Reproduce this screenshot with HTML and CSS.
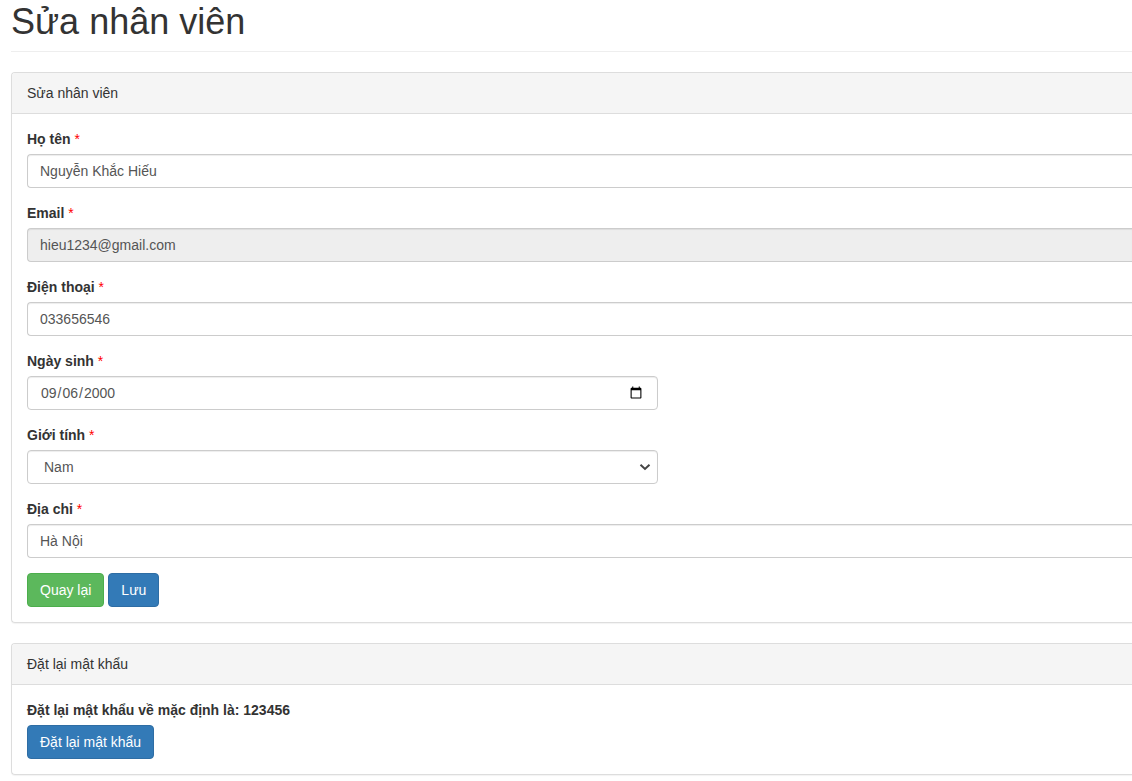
FILE: index.html
```html
<!DOCTYPE html>
<html lang="vi">
<head>
<meta charset="utf-8">
<meta name="viewport" content="width=device-width, initial-scale=1">
<title>Sửa nhân viên</title>
<link rel="stylesheet" href="styles.css">
</head>
<body>
<main class="page">
  <h1 class="page-header">Sửa nhân viên</h1>
  <section class="panel">
    <div class="panel-heading">Sửa nhân viên</div>
    <form class="panel-body">
      <div class="form-group">
        <label for="name">Họ tên <span class="required">*</span></label>
        <input class="form-control" id="name" type="text" value="Nguyễn Khắc Hiếu">
      </div>
      <div class="form-group">
        <label for="email">Email <span class="required">*</span></label>
        <input class="form-control" id="email" type="email" value="hieu1234@gmail.com" readonly>
      </div>
      <div class="form-group">
        <label for="phone">Điện thoại <span class="required">*</span></label>
        <input class="form-control" id="phone" type="text" value="033656546">
      </div>
      <div class="form-group half">
        <label for="birthday">Ngày sinh <span class="required">*</span></label>
        <input class="form-control" id="birthday" type="date" value="2000-09-06">
      </div>
      <div class="form-group half">
        <label for="gender">Giới tính <span class="required">*</span></label>
        <div class="select">
          <select class="form-control" id="gender"><option>Nam</option><option>Nữ</option></select>
          <svg class="chevron" viewBox="0 0 12 8" aria-hidden="true"><path d="M1.5 1.7 L6 5.9 L10.5 1.7"/></svg>
        </div>
      </div>
      <div class="form-group">
        <label for="address">Địa chỉ <span class="required">*</span></label>
        <input class="form-control" id="address" type="text" value="Hà Nội">
      </div>
      <div class="actions">
        <button class="btn btn-success" type="button">Quay lại</button>
        <button class="btn btn-primary" type="submit">Lưu</button>
      </div>
    </form>
  </section>
  <section class="panel">
    <div class="panel-heading">Đặt lại mật khẩu</div>
    <form class="panel-body">
      <label for="reset">Đặt lại mật khẩu về mặc định là: 123456</label>
      <div class="actions">
        <button class="btn btn-primary" id="reset" type="button">Đặt lại mật khẩu</button>
      </div>
    </form>
  </section>
</main>
</body>
</html>
```
FILE: styles.css
```css
* { box-sizing: border-box; }

body {
  margin: 0;
  background: #fff;
  color: #333;
  font: 14px/20px "Liberation Sans", Arial, sans-serif;
}

.page { padding-left: 11px; }

.page-header {
  margin: 0 0 20px;
  padding: 2px 0 9px;
  border-bottom: 1px solid #eee;
  font-size: 36px;
  font-weight: 400;
  line-height: 40px;
}

/* Panels and full-width fields are flush with the right edge. */
.panel {
  margin-bottom: 20px;
  border: 1px solid #ddd;
  border-right: 0;
  border-radius: 4px 0 0 4px;
  box-shadow: 0 1px 1px rgba(0, 0, 0, .05);
}

.panel:last-child { margin-bottom: 5px; }

.panel-heading {
  padding: 10px 15px;
  border-bottom: 1px solid #ddd;
  border-radius: 3px 0 0 0;
  background: #f5f5f5;
}

.panel-body { padding: 15px 0 15px 15px; }

.form-group { margin-bottom: 15px; }

.half { width: 57.1%; }

label {
  display: block;
  margin-bottom: 5px;
  font-weight: 700;
}

.required {
  color: #f00;
  font-weight: 400;
}

.form-control {
  display: block;
  width: 100%;
  height: 34px;
  padding: 6px 12px;
  border: 1px solid #ccc;
  border-right: 0;
  border-radius: 4px 0 0 4px;
  background: #fff;
  box-shadow: inset 0 1px 1px rgba(0, 0, 0, .075);
  color: #555;
  font: inherit;
}

.half .form-control {
  border-right: 1px solid #ccc;
  border-radius: 4px;
}

.form-control[readonly] { background: #eee; }

.select { position: relative; }

.select .form-control {
  padding-left: 16px;
  appearance: none;
}

.chevron {
  position: absolute;
  top: 13px;
  right: 7px;
  width: 12px;
  height: 8px;
  fill: none;
  stroke: #444;
  stroke-width: 2;
  pointer-events: none;
}

.actions {
  display: flex;
  gap: 4px;
}

.btn {
  padding: 6px 12px;
  border: 1px solid;
  border-radius: 4px;
  color: #fff;
  font: inherit;
  cursor: pointer;
}

.btn-success { border-color: #4cae4c; background: #5cb85c; }
.btn-primary { border-color: #2e6da4; background: #337ab7; }
```
